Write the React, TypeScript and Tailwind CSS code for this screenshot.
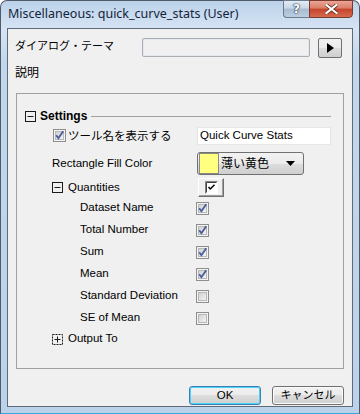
import React from "react";

function VCheck({ checked }: { checked: boolean }) {
  return (
    <svg width="13" height="13" viewBox="0 0 13 13" className="block shrink-0">
      <defs>
        <linearGradient id="vcg" x1="0" y1="0" x2="1" y2="1">
          <stop offset="0" stopColor="#cfcfcf" />
          <stop offset="1" stopColor="#f6f6f6" />
        </linearGradient>
      </defs>
      <rect x="0.5" y="0.5" width="12" height="12" fill="#f4f4f4" stroke="#8e8e8e" />
      <rect x="2.5" y="2.5" width="8" height="8" fill="url(#vcg)" stroke="#b8b8b8" />
      {checked && (
        <path d="M3.2 6.3 L5.4 9.2 L10.2 2.2" stroke="#4b5f9c" strokeWidth="1.9" fill="none" />
      )}
    </svg>
  );
}

function TreeBox({ plus }: { plus?: boolean }) {
  return (
    <svg width="11" height="11" viewBox="0 0 11 11" className="block shrink-0">
      <rect
        x="0.5"
        y="0.5"
        width="10"
        height="10"
        fill="none"
        stroke="#1a1a1a"
        strokeDasharray={plus ? "2 1" : undefined}
      />
      <line x1="2.5" y1="5.5" x2="8.5" y2="5.5" stroke="#1a1a1a" />
      {plus && <line x1="5.5" y1="2.5" x2="5.5" y2="8.5" stroke="#1a1a1a" />}
    </svg>
  );
}

const rows: [string, boolean][] = [
  ["Dataset Name", true],
  ["Total Number", true],
  ["Sum", true],
  ["Mean", true],
  ["Standard Deviation", false],
  ["SE of Mean", false],
];

export default function App() {
  return (
    <div className="w-[360px] h-[414px] font-['Liberation_Sans','Noto_Sans_CJK_JP',sans-serif] text-[11.5px] text-black">
      <div className="w-full h-full flex flex-col rounded-t-[7px] border border-[#4f5b68] border-b-[#3aa6da] bg-[linear-gradient(to_bottom,#bcd2ea_0px,#d6e4f4_28px,#c3d7ec_60px,#bcd2ea_100%)]">
        {/* Title bar */}
        <div className="h-[27px] flex items-start">
          <div className="pl-[7px] pt-[5px] flex-1 font-['Noto_Sans',sans-serif] text-[12.5px] leading-[16px] text-[#14243a]">
            Miscellaneous: quick_curve_stats (User)
          </div>
          <div className="flex mr-[6px] -mt-px">
            <div className="w-[26px] h-[18px] flex items-center justify-center rounded-bl-[4px] border border-[#6a7b8e] border-r-0 bg-[linear-gradient(to_bottom,#e3ecf6_0%,#c8d6e6_45%,#a8bbd0_50%,#bccde0_100%)]">
              <span className="font-['DejaVu_Sans',sans-serif] font-bold text-[12px] leading-[12px] text-white [text-shadow:0_0_1px_#2a3b50,0_0_1px_#2a3b50,0_0_2px_#2a3b50]">?</span>
            </div>
            <div className="w-[44px] h-[18px] flex items-center justify-center rounded-br-[4px] border border-[#7a3a30] bg-[linear-gradient(to_bottom,#eaa596_0%,#dc7d68_45%,#c5432b_50%,#d46a4e_100%)]">
              <svg width="13" height="10" viewBox="0 0 13 10">
                <path d="M1.5 1 L11.5 9 M11.5 1 L1.5 9" stroke="#5a2318" strokeWidth="3.6" strokeLinecap="square" />
                <path d="M1.5 1 L11.5 9 M11.5 1 L1.5 9" stroke="#ffffff" strokeWidth="2.2" strokeLinecap="square" />
              </svg>
            </div>
          </div>
        </div>

        {/* Client area */}
        <div className="mx-[6px] mb-[6px] flex-1 border border-[#5e6b7a] bg-[#f0f0f0] flex flex-col pl-[8px] pr-[8px]">
          {/* Theme row */}
          <div className="mt-[9px] h-[20px] flex items-center">
            <div className="w-[127px] -ml-[1px] text-[11px] leading-[14px] pb-[4px]">ダイアログ・テーマ</div>
            <div className="w-[168px] h-[19px] mb-[1px] rounded-[2px] border border-[#abadb3] bg-[#f0f0f0] shadow-[inset_0_0_0_1px_#e3e9ef]" />
            <div className="ml-[8px] w-[24px] h-[20px] rounded-[2px] border border-[#707070] bg-[linear-gradient(to_bottom,#f2f2f2_0%,#ebebeb_50%,#dddddd_50%,#cfcfcf_100%)] flex items-center justify-center">
              <svg width="8" height="10" viewBox="0 0 8 10">
                <path d="M1 0 L8 5 L1 10 Z" fill="#000" />
              </svg>
            </div>
          </div>

          {/* Description */}
          <div className="mt-[6px] h-[18px] flex items-center -ml-[1px] text-[12px] leading-[14px]">説明</div>

          {/* Group box */}
          <div className="mt-[11px] h-[276px] border border-[#a0a0a0] flex flex-col pt-[13px]">
            {/* Settings header */}
            <div className="h-[18px] flex items-center pl-[8px] pr-[12px]">
              <TreeBox />
              <span className="ml-[4px] font-bold text-[12px] leading-[14px]">Settings</span>
              <div className="ml-[4px] flex-1 h-px bg-[#a0a0a0]" />
            </div>

            {/* Show tool name */}
            <div className="mt-[1px] h-[19px] flex items-center pl-[35px]">
              <div className="w-[145px] flex items-center">
                <div className="ml-[1px]">
                  <VCheck checked />
                </div>
                <span className="ml-[2px] text-[11.5px] leading-[14px]">ツール名を表示する</span>
              </div>
              <div className="w-[134px] h-[18px] bg-white border border-[#e6e6e6] flex items-center pl-[2px] text-[11.5px]">
                Quick Curve Stats
              </div>
            </div>

            {/* Rectangle Fill Color */}
            <div className="mt-[7px] h-[23px] flex items-center pl-[35px]">
              <div className="w-[145px]">Rectangle Fill Color</div>
              <div className="w-[107px] h-[23px] rounded-[3px] border border-[#707070] bg-[linear-gradient(to_bottom,#f2f2f2_0%,#ebebeb_50%,#dddddd_50%,#cfcfcf_100%)] flex items-center pl-px pr-[8px]">
                <div className="w-[20px] h-[21px] bg-[#ffff80] border border-[#8a8a8a]" />
                <span className="ml-[2px] text-[12px] leading-[14px] flex-1">薄い黄色</span>
                <svg width="9" height="5" viewBox="0 0 9 5">
                  <path d="M0 0 L9 0 L4.5 5 Z" fill="#000" />
                </svg>
              </div>
            </div>

            {/* Quantities */}
            <div className="mt-[3px] h-[19px] flex items-center pl-[35px]">
              <div className="w-[146px] flex items-center">
                <TreeBox />
                <span className="ml-[5px]">Quantities</span>
              </div>
              <div className="w-[26px] h-[19px] border border-t-white border-l-white border-r-[#6f6f6f] border-b-[#6f6f6f] shadow-[inset_-1px_-1px_0_#a0a0a0] bg-[#f0f0f0] flex items-start pl-[6px] pt-[2px]">
                <svg width="13" height="13" viewBox="0 0 13 13" className="block">
                  <rect x="0" y="0" width="13" height="13" fill="#ffffff" />
                  <path d="M0.5 12.5 L0.5 0.5 L12.5 0.5" stroke="#808080" fill="none" />
                  <path d="M1.5 11.5 L1.5 1.5 L11.5 1.5" stroke="#404040" fill="none" />
                  <path d="M3.5 6 L5.3 8 L9.5 3.8" stroke="#000" strokeWidth="1.5" fill="none" />
                </svg>
              </div>
            </div>

            {/* Check rows */}
            {rows.map(([label, checked]) => (
              <div key={label} className="h-[22px] flex items-center pl-[63px]">
                <div className="w-[116px]">{label}</div>
                <VCheck checked={checked} />
              </div>
            ))}

            {/* Output To */}
            <div className="h-[20px] flex items-center pl-[35px]">
              <TreeBox plus />
              <span className="ml-[5px]">Output To</span>
            </div>
          </div>

          {/* Buttons */}
          <div className="mt-[17px] flex justify-end gap-[11px]">
            <div className="w-[72px] h-[19px] rounded-[3px] border border-[#3c7fb1] shadow-[inset_0_0_0_1px_#48d2fe] bg-[linear-gradient(to_bottom,#f2f2f2_0%,#ebebeb_50%,#dddddd_50%,#cfcfcf_100%)] flex items-center justify-center text-[11.5px]">
              OK
            </div>
            <div className="w-[72px] h-[19px] rounded-[3px] border border-[#707070] shadow-[inset_0_0_0_1px_#fbfbfb] bg-[linear-gradient(to_bottom,#f2f2f2_0%,#ebebeb_50%,#dddddd_50%,#cfcfcf_100%)] flex items-center justify-center text-[11px]">
              キャンセル
            </div>
          </div>
        </div>
      </div>
    </div>
  );
}
